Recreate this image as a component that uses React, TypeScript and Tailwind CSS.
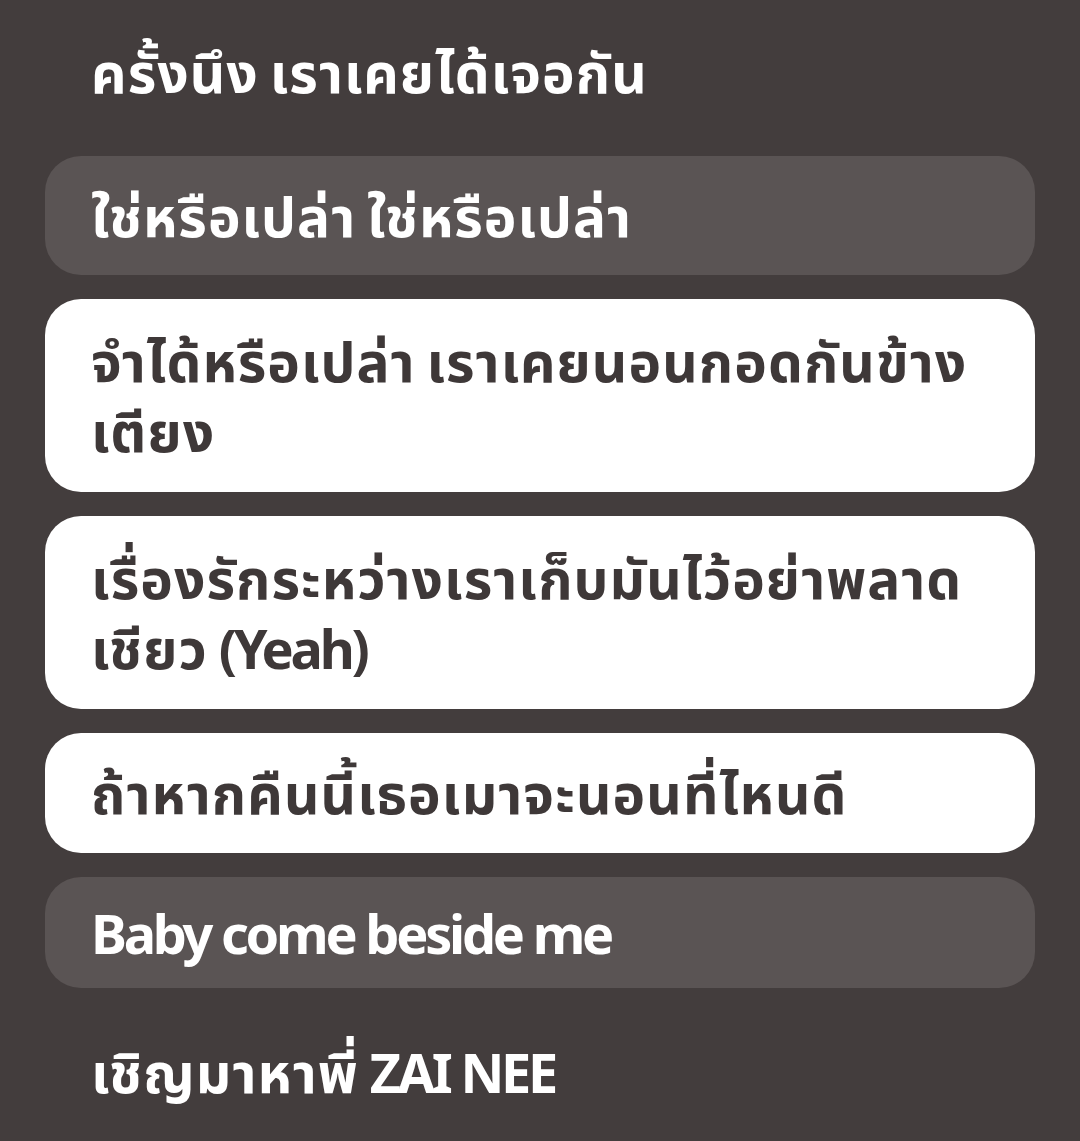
type Tone = "none" | "dim" | "lit"

const lines: { text: string[]; tone: Tone; h: string }[] = [
  { text: ["ครั้งนึง เราเคยได้เจอกัน"], tone: "none", h: "h-[120px]" },
  { text: ["ใช่หรือเปล่า ใช่หรือเปล่า"], tone: "dim", h: "h-[119px]" },
  { text: ["จำได้หรือเปล่า เราเคยนอนกอดกันข้าง", "เตียง"], tone: "lit", h: "h-[193px]" },
  { text: ["เรื่องรักระหว่างเราเก็บมันไว้อย่าพลาด", "เชียว (Yeah)"], tone: "lit", h: "h-[193px]" },
  { text: ["ถ้าหากคืนนี้เธอเมาจะนอนที่ไหนดี"], tone: "lit", h: "h-[120px]" },
  { text: ["Baby come beside me"], tone: "dim", h: "h-[111px]" },
  { text: ["เชิญมาหาพี่ ZAI NEE"], tone: "none", h: "h-[120px]" },
]

// thai runs get a bigger size, latin runs are tighter
function Line({ text }: { text: string }) {
  const parts = text.split(/([\u0E00-\u0E7F]+)/).filter(p => p.length > 0)
  return (
    <div className="h-[70px] whitespace-nowrap text-[55px] leading-[70px]">
      {parts.map((p, i) =>
        /[\u0E00-\u0E7F]/.test(p) ? (
          <span key={i} className="tracking-[0.02em]">{p}</span>
        ) : (
          <span key={i} className="text-[54px] tracking-[-0.06em]">{p}</span>
        )
      )}
    </div>
  )
}

export default function App() {
  return (
    <div
      className="w-[1080px] h-[1141px] overflow-hidden bg-[#433d3d] pt-3 px-[45px] flex flex-col gap-6"
      style={{ fontFamily: '"Noto Sans", "Noto Sans Thai", "Open Sans", sans-serif' }}
    >
      {lines.map((l, i) => (
        <div
          key={i}
          className={
            "shrink-0 flex flex-col justify-center rounded-[36px] px-[46px] font-bold " +
            l.h +
            " " +
            (l.tone === "lit"
              ? "bg-white text-[#3e3838]"
              : l.tone === "dim"
              ? "bg-[#5a5454] text-white"
              : "text-white")
          }
        >
          {l.text.map((t, j) => (
            <Line key={j} text={t} />
          ))}
        </div>
      ))}
    </div>
  )
}
